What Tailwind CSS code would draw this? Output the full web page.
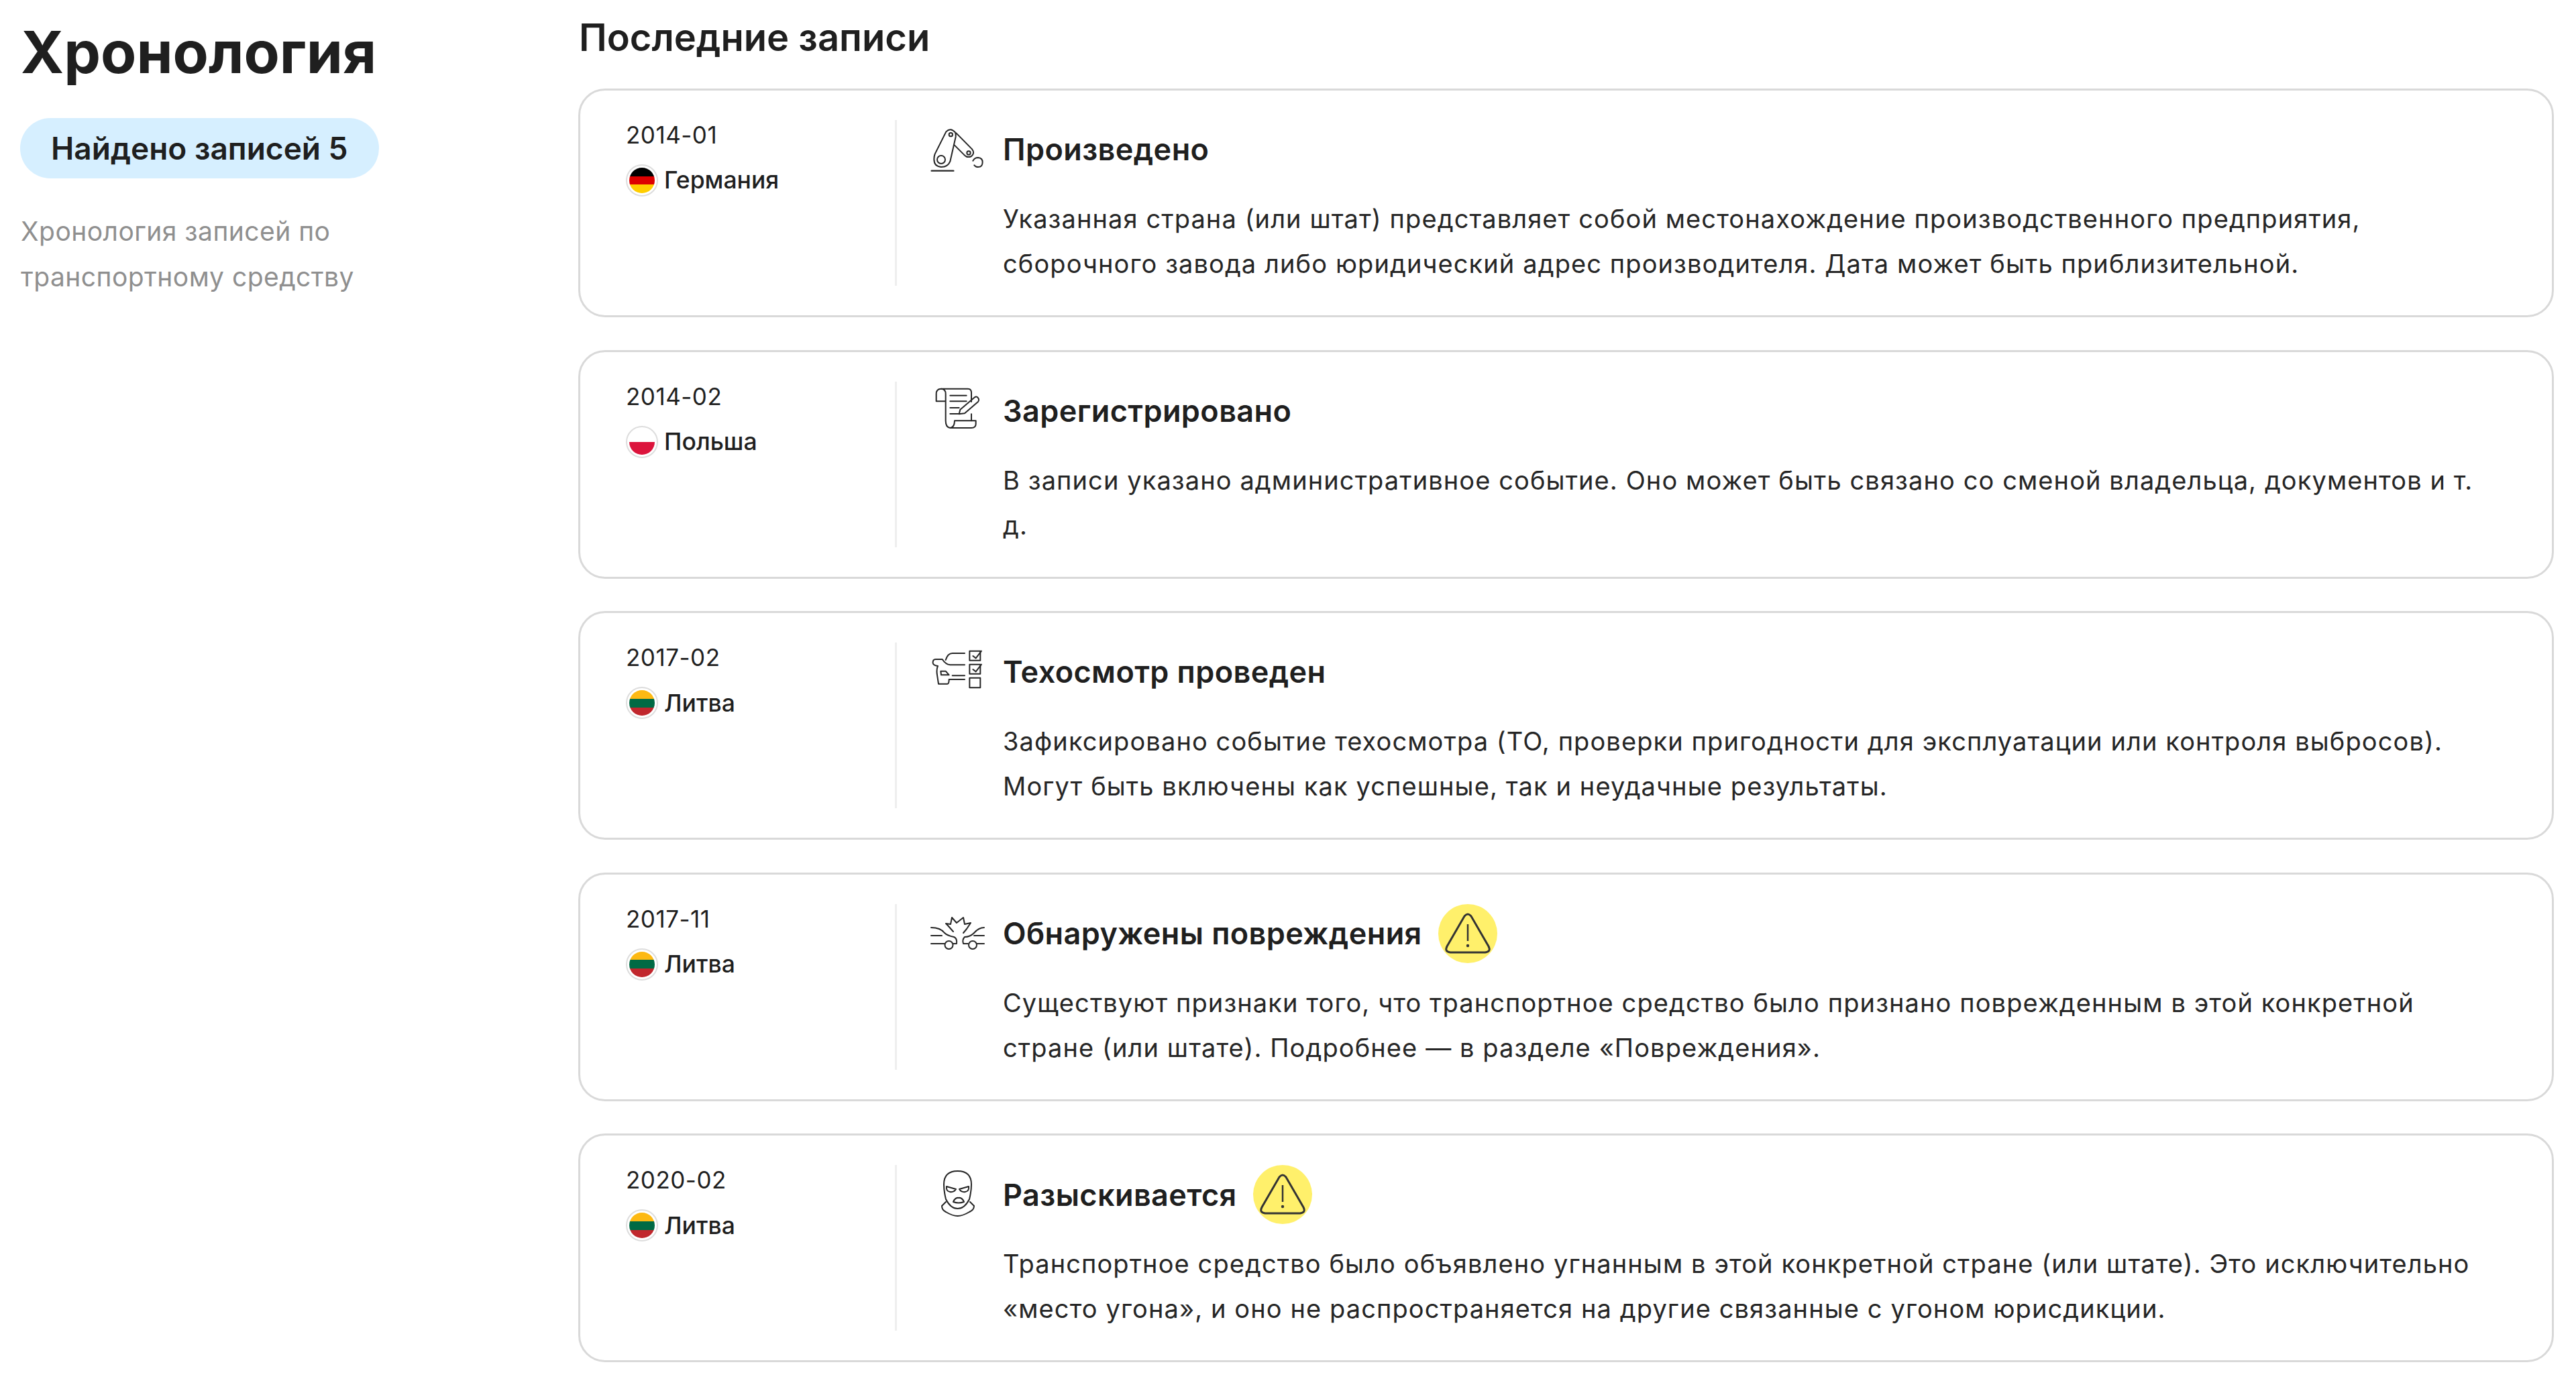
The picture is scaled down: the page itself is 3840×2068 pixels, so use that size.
<!DOCTYPE html>
<html lang="ru"><head><meta charset="utf-8"><script src="https://cdn.jsdelivr.net/npm/@tailwindcss/browser@4"></script></head>
<body class="bg-white font-['Inter',sans-serif] text-[#1f1f1f] antialiased">
<div class="flex w-[3840px] h-[2068px] pl-[31px] overflow-hidden">
<aside class="w-[831px] shrink-0 pt-[28px]">
<h1 class="text-[87px] leading-[100px] font-bold">Хронология</h1>
<div class="mt-[48px] -ml-[1px] inline-flex items-center h-[90px] px-[46px] rounded-full bg-[#d6efff] text-[46px] font-semibold">Найдено записей 5</div>
<p class="mt-[45px] w-[540px] text-[39px] leading-[68px] text-[#8f8f8f] tracking-[0.45px]">Хронология записей по транспортному средству</p>
</aside>
<main class="w-[2945px] shrink-0">
<h2 class="text-[56px] leading-[70px] font-semibold mt-[21px] mb-[41px] ml-[1px]">Последние записи</h2>
<div class="flex flex-col gap-[48.6px]">

<article class="h-[341px] border-[3px] border-[#d9d9d9] rounded-[40px] flex pt-[44px] pl-[68px] pr-[72px]">
<div class="w-[401px] shrink-0"><div class="text-[35px] leading-[44px] tracking-[0.5px]">2014-01</div>
<div class="flex items-center mt-[22px] h-[48px]"><span class="w-[48px] h-[48px] rounded-full border-[2px] border-[#dddddd] p-[3px] shrink-0"><span class="flex flex-col w-full h-full rounded-full overflow-hidden"><i class="flex-1 bg-black"></i><i class="flex-1 bg-[#dd0000]"></i><i class="flex-1 bg-[#ffce00]"></i></span></span><span class="ml-[9px] text-[35.5px] font-medium">Германия</span></div></div>
<div class="w-[3px] h-[247px] bg-[#eeeeee] shrink-0"></div>
<div class="flex-1 ml-[46px] min-w-0">
<div class="flex items-center h-[88px]">
<svg class="w-[90px] h-[90px] -mt-[18px] shrink-0" viewBox="70 0 270 270" fill="none" stroke="#262626" stroke-width="6" stroke-linecap="round" stroke-linejoin="round"><path d="M87 257H185" stroke-width="7"/><path d="M152 82Q172 62 192 84Q197 92 195 105L170 215Q160 240 130 240Q98 238 98 205Q98 192 102 182Z"/><circle cx="173" cy="95" r="8"/><circle cx="130" cy="207" r="18"/><path d="M197 88L268 160Q282 178 265 192Q248 200 235 188L190 143"/><circle cx="253" cy="177" r="8"/><path d="M272 212Q280 198 295 198Q315 200 315 218Q315 240 295 240Q284 240 278 232"/></svg>
<h3 class="ml-[22px] text-[45px] font-semibold tracking-[0.4px] whitespace-nowrap">Произведено</h3></div>
<p class="mt-[26px] ml-[112px] text-[38px] leading-[67px] text-[#262626] tracking-[1.1px]">Указанная страна (или штат) представляет собой местонахождение производственного предприятия, сборочного завода либо юридический адрес производителя. Дата может быть приблизительной.</p></div>
</article>

<article class="h-[341px] border-[3px] border-[#d9d9d9] rounded-[40px] flex pt-[44px] pl-[68px] pr-[72px]">
<div class="w-[401px] shrink-0"><div class="text-[35px] leading-[44px] tracking-[0.5px]">2014-02</div>
<div class="flex items-center mt-[22px] h-[48px]"><span class="w-[48px] h-[48px] rounded-full border-[2px] border-[#dddddd] p-[3px] shrink-0"><span class="flex flex-col w-full h-full rounded-full overflow-hidden"><i class="flex-1 bg-white"></i><i class="flex-1 bg-[#dc143c]"></i></span></span><span class="ml-[9px] text-[35.5px] font-medium">Польша</span></div></div>
<div class="w-[3px] h-[247px] bg-[#eeeeee] shrink-0"></div>
<div class="flex-1 ml-[46px] min-w-0">
<div class="flex items-center h-[88px]">
<svg class="w-[90px] h-[90px] -mt-[18px] shrink-0" viewBox="70 0 270 270" fill="none" stroke="#262626" stroke-width="6" stroke-linecap="round" stroke-linejoin="round"><path d="M150 118H108V85Q108 62 130 62Q150 62 150 85V205Q150 235 170 237Q190 235 190 205H285V220Q285 237 265 237H170"/><path d="M130 62H250Q265 62 265 80V120M265 175V205"/><path d="M170 92H243M170 118H243M170 147H210M170 174H215"/><path d="M215 155L280 100Q290 92 298 108Q300 115 295 120L235 172L210 175Z"/></svg>
<h3 class="ml-[22px] text-[45px] font-semibold tracking-[0.4px] whitespace-nowrap">Зарегистрировано</h3></div>
<p class="mt-[26px] ml-[112px] text-[38px] leading-[67px] text-[#262626] tracking-[1.1px]">В записи указано административное событие. Оно может быть связано со сменой владельца, документов и т. д.</p></div>
</article>

<article class="h-[341px] border-[3px] border-[#d9d9d9] rounded-[40px] flex pt-[44px] pl-[68px] pr-[72px]">
<div class="w-[401px] shrink-0"><div class="text-[35px] leading-[44px] tracking-[0.5px]">2017-02</div>
<div class="flex items-center mt-[22px] h-[48px]"><span class="w-[48px] h-[48px] rounded-full border-[2px] border-[#dddddd] p-[3px] shrink-0"><span class="flex flex-col w-full h-full rounded-full overflow-hidden"><i class="flex-1 bg-[#fdb913]"></i><i class="flex-1 bg-[#006a44]"></i><i class="flex-1 bg-[#c1272d]"></i></span></span><span class="ml-[9px] text-[35.5px] font-medium">Литва</span></div></div>
<div class="w-[3px] h-[247px] bg-[#eeeeee] shrink-0"></div>
<div class="flex-1 ml-[46px] min-w-0">
<div class="flex items-center h-[88px]">
<svg class="w-[90px] h-[90px] -mt-[18px] shrink-0" viewBox="70 0 270 270" fill="none" stroke="#262626" stroke-width="6" stroke-linecap="round" stroke-linejoin="round"><path d="M235 130H170Q150 128 135 105H105Q92 105 93 122Q95 133 115 135Q108 150 112 175L118 215H158Q165 215 165 195H235"/><path d="M235 78H180Q160 78 150 108"/><path d="M180 178H235"/><path d="M128 158H150L165 175H130Z"/><path d="M305 110V68H257V110ZM305 170V128H257V170ZM305 232V188H257V232Z"/><path d="M272 90L285 100L310 68M272 150L285 160L310 128"/></svg>
<h3 class="ml-[22px] text-[45px] font-semibold tracking-[0.4px] whitespace-nowrap">Техосмотр проведен</h3></div>
<p class="mt-[26px] ml-[112px] text-[38px] leading-[67px] text-[#262626] tracking-[1.1px]">Зафиксировано событие техосмотра (ТО, проверки пригодности для эксплуатации или контроля выбросов). Могут быть включены как успешные, так и неудачные результаты.</p></div>
</article>

<article class="h-[341px] border-[3px] border-[#d9d9d9] rounded-[40px] flex pt-[44px] pl-[68px] pr-[72px]">
<div class="w-[401px] shrink-0"><div class="text-[35px] leading-[44px] tracking-[0.5px]">2017-11</div>
<div class="flex items-center mt-[22px] h-[48px]"><span class="w-[48px] h-[48px] rounded-full border-[2px] border-[#dddddd] p-[3px] shrink-0"><span class="flex flex-col w-full h-full rounded-full overflow-hidden"><i class="flex-1 bg-[#fdb913]"></i><i class="flex-1 bg-[#006a44]"></i><i class="flex-1 bg-[#c1272d]"></i></span></span><span class="ml-[9px] text-[35.5px] font-medium">Литва</span></div></div>
<div class="w-[3px] h-[247px] bg-[#eeeeee] shrink-0"></div>
<div class="flex-1 ml-[46px] min-w-0">
<div class="flex items-center h-[88px]">
<svg class="w-[90px] h-[90px] shrink-0" viewBox="23 0 90 90" fill="none" stroke="#262626" stroke-width="2" stroke-linecap="round" stroke-linejoin="round"><path d="M61 42L53 33L50 30L57 31L59 21L66 29L76 21L78 31L87 29L81 38L76 44"/><path d="M28 36Q42 36 48 44Q52 48 62 50Q67 52 66 60H61M28 48H44M28 60H48"/><circle cx="54.5" cy="62" r="6"/><path d="M107 36Q99 36 92 44Q86 50 78 50Q74 54 76 60H83M107 48H92M107 60H96"/><circle cx="90" cy="62" r="6"/></svg>
<h3 class="ml-[22px] text-[45px] font-semibold tracking-[0.4px] whitespace-nowrap">Обнаружены повреждения</h3>
<svg class="w-[88px] h-[88px] ml-[24px] shrink-0" viewBox="0 0 88 88"><circle cx="44" cy="44" r="44" fill="#fff06b"/><path d="M39 18Q44 12 49 18L75 63Q79 71 70 72H18Q9 71 13 63Z" fill="none" stroke="#333" stroke-width="3"/><path d="M44 30V55" stroke="#333" stroke-width="2.5"/><circle cx="44" cy="62" r="2.2" fill="#333"/></svg></div>
<p class="mt-[26px] ml-[112px] text-[38px] leading-[67px] text-[#262626] tracking-[1.1px]">Существуют признаки того, что транспортное средство было признано поврежденным в этой конкретной стране (или штате). Подробнее — в разделе «Повреждения».</p></div>
</article>

<article class="h-[341px] border-[3px] border-[#d9d9d9] rounded-[40px] flex pt-[44px] pl-[68px] pr-[72px]">
<div class="w-[401px] shrink-0"><div class="text-[35px] leading-[44px] tracking-[0.5px]">2020-02</div>
<div class="flex items-center mt-[22px] h-[48px]"><span class="w-[48px] h-[48px] rounded-full border-[2px] border-[#dddddd] p-[3px] shrink-0"><span class="flex flex-col w-full h-full rounded-full overflow-hidden"><i class="flex-1 bg-[#fdb913]"></i><i class="flex-1 bg-[#006a44]"></i><i class="flex-1 bg-[#c1272d]"></i></span></span><span class="ml-[9px] text-[35.5px] font-medium">Литва</span></div></div>
<div class="w-[3px] h-[247px] bg-[#eeeeee] shrink-0"></div>
<div class="flex-1 ml-[46px] min-w-0">
<div class="flex items-center h-[88px]">
<svg class="w-[90px] h-[90px] shrink-0" viewBox="23 0 90 90" fill="none" stroke="#262626" stroke-width="2" stroke-linecap="round" stroke-linejoin="round"><path d="M50 52Q47 40 47 30Q47 10 67.5 10Q88 10 88 30Q88 40 85 52Q78 66 67.5 66Q57 66 50 52Z"/><path d="M50 56L44 62Q44 68 50 71Q60 77 67.5 77Q75 77 85 71Q92 68 92 62L86 56"/><path d="M51 33L65 37Q62 42 56 41Q50 40 51 33ZM84 33L70 37Q73 42 79 41Q85 40 84 33Z"/><path d="M61 56Q64 49 69 50Q74 49 77 56Q69 59 61 56Z"/></svg>
<h3 class="ml-[22px] text-[45px] font-semibold tracking-[0.4px] whitespace-nowrap">Разыскивается</h3>
<svg class="w-[88px] h-[88px] ml-[24px] shrink-0" viewBox="0 0 88 88"><circle cx="44" cy="44" r="44" fill="#fff06b"/><path d="M39 18Q44 12 49 18L75 63Q79 71 70 72H18Q9 71 13 63Z" fill="none" stroke="#333" stroke-width="3"/><path d="M44 30V55" stroke="#333" stroke-width="2.5"/><circle cx="44" cy="62" r="2.2" fill="#333"/></svg></div>
<p class="mt-[26px] ml-[112px] text-[38px] leading-[67px] text-[#262626] tracking-[1.1px]">Транспортное средство было объявлено угнанным в этой конкретной стране (или штате). Это исключительно «место угона», и оно не распространяется на другие связанные с угоном юрисдикции.</p></div>
</article>

</div>
</main>
</div>
</body></html>
